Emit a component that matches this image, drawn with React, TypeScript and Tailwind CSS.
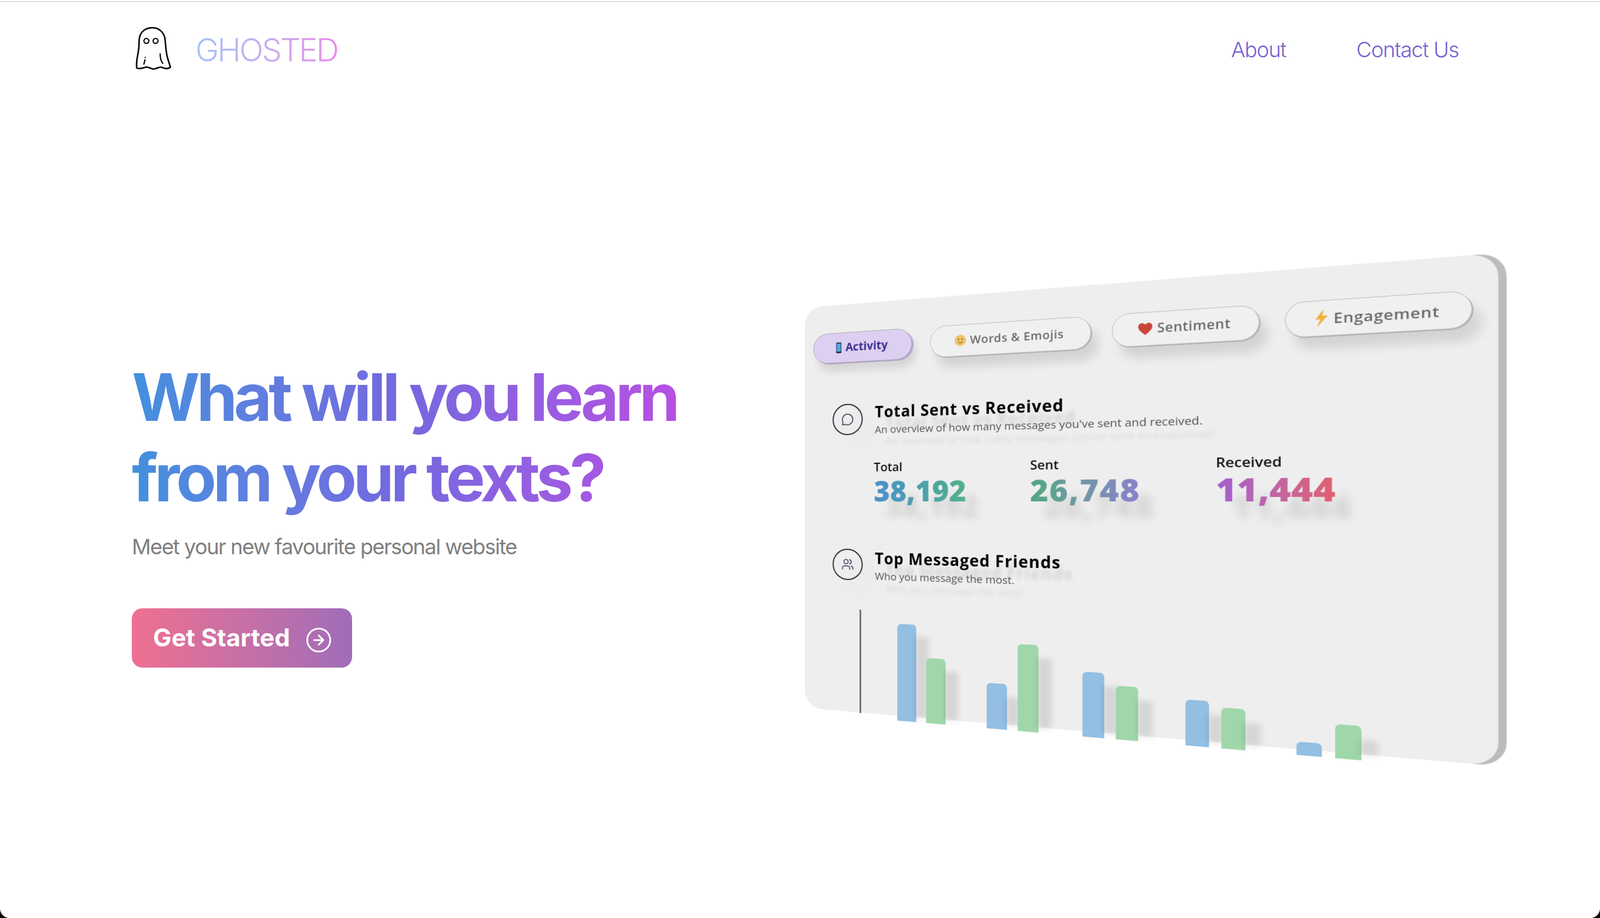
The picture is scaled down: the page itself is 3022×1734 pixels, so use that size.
import { CircleArrowRight, MessageCircle, Users } from 'lucide-react';

const tabs = [
  { label: 'Words & Emojis', width: 'w-[274px]', text: 'text-[20px] tracking-[0.6px]', icon: 'smile' },
  { label: 'Sentiment', width: 'w-[221px]', text: 'text-[21px] tracking-[0.5px]', icon: 'heart' },
  { label: 'Engagement', width: 'ml-[3px] w-[246px]', text: 'text-[22px] tracking-[0.6px]', icon: 'bolt' },
];

// blue / green heights per friend, read off the reference
const friends = [
  { sent: 'h-[176px]', received: 'h-[117px]' },
  { sent: 'h-[80px]', received: 'h-[151px]' },
  { sent: 'h-[110px]', received: 'h-[90px]' },
  { sent: 'h-[75px]', received: 'h-[66px]' },
  { sent: 'h-[21px]', received: 'h-[53px]' },
];

function GhostLogo() {
  return (
    <svg viewBox="100 140 215 255" className="-mt-[6px] h-[85px] w-[72px]" fill="none" stroke="#000" strokeLinecap="round" strokeLinejoin="round">
      <path
        strokeWidth="8.5"
        d="M112 378 C108 340 118 310 122 280 C127 250 124 225 128 205 C136 170 165 150 200 150 C238 150 265 175 272 210 C276 240 276 270 284 310 C290 335 298 355 303 373 C290 385 270 382 255 375 C240 368 225 385 205 384 C190 383 178 370 165 373 C150 376 128 388 112 378 Z"
      />
      <circle cx="167" cy="225" r="14" strokeWidth="7" />
      <circle cx="219" cy="225" r="14" strokeWidth="7" />
      <path strokeWidth="7" d="M159 332 L153 356 M160 318 L160 319 M245 298 C245 320 250 340 260 352" />
    </svg>
  );
}

function TabIcon({ kind }: { kind: string }) {
  if (kind === 'smile') {
    return (
      <svg viewBox="0 0 20 20" className="h-[22px] w-[20px] shrink-0">
        <circle cx="10" cy="10" r="10" fill="#eec36a" />
        <circle cx="7" cy="8" r="1.2" fill="#6b5a2a" />
        <circle cx="13" cy="8" r="1.2" fill="#6b5a2a" />
        <path d="M6 12.5 C8 15 12 15 14 12.5" stroke="#6b5a2a" strokeWidth="1.2" fill="none" />
      </svg>
    );
  }
  if (kind === 'heart') {
    return (
      <svg viewBox="0 0 24 22" className="h-[20px] w-[22px] shrink-0">
        <path fill="#c8453a" d="M12 22 C5 16 0 12 0 6.5 C0 2.5 3 0 6.3 0 C8.6 0 10.8 1.2 12 3.4 C13.2 1.2 15.4 0 17.7 0 C21 0 24 2.5 24 6.5 C24 12 19 16 12 22 Z" />
      </svg>
    );
  }
  return (
    <svg viewBox="0 0 20 30" className="h-[28px] w-[19px] shrink-0">
      <path fill="#efb23c" d="M13 0 L1 17 L8 17 L3 30 L19 11 L11 11 Z" />
    </svg>
  );
}

function Tab({ label, width, text, icon }: { label: string; width: string; text: string; icon: string }) {
  return (
    <div className={`${width} flex h-[56px] items-center justify-center gap-[7px] rounded-full border border-[#bdbdbd] bg-[#f0f0f0] shadow-[1.5px_1.5px_0_#b0b0b0,12px_20px_16px_rgba(0,0,0,0.11)]`}>
      <TabIcon kind={icon} />
      <span className={`${text} font-semibold text-[#6a6a6a] [font-family:'Open_Sans',sans-serif]`}>{label}</span>
    </div>
  );
}

function SectionHead({ title, sub, icon }: { title: string; sub: string; icon: React.ReactNode }) {
  return (
    <div className="flex items-start gap-[23px]">
      <div className="flex size-[58px] shrink-0 items-center justify-center rounded-full border-2 border-[#222] text-[#26304f] [filter:drop-shadow(20px_24px_6px_rgba(0,0,0,0.05))]">
        {icon}
      </div>
      <div className="[font-family:'Open_Sans',sans-serif]">
        <div className="text-[28px] leading-[32px] font-bold tracking-[1px] text-black [text-shadow:20px_20px_6px_rgba(0,0,0,0.1)]">{title}</div>
        <div className="mt-[5px] text-[19px] leading-[24px] text-[#555] [text-shadow:20px_22px_6px_rgba(0,0,0,0.1)]">{sub}</div>
      </div>
    </div>
  );
}

function Stat({ label, value, width, gradient }: { label: string; value: string; width: string; gradient: string }) {
  return (
    <div className={`${width} shrink-0 [font-family:'Open_Sans',sans-serif]`}>
      <div className="text-[22px] leading-[26px] font-semibold text-[#111]">{label}</div>
      <div className="[filter:drop-shadow(22px_28px_7px_rgba(0,0,0,0.11))]">
        <span className={`${gradient} mt-[2px] inline-block bg-clip-text text-[52px] leading-[58px] font-extrabold text-transparent`}>{value}</span>
      </div>
    </div>
  );
}

function Bar({ height, color }: { height: string; color: string }) {
  return (
    <div className={`${height} ${color} relative w-[35px] rounded-t-[7px]`}>
      <div className="absolute top-[22px] bottom-[8px] left-[33px] w-[24px] bg-black/10 blur-[5px]" />
    </div>
  );
}

export default function App() {
  return (
    <div className="h-[1734px] w-full overflow-hidden bg-black [font-family:Inter,sans-serif]">
      <div className="h-full w-full overflow-hidden rounded-b-[18px] bg-white pt-[2px]">
        <div className="h-[2px] bg-[#dedede]" />

        <header className="flex h-[177px] items-center justify-between pt-[3px] pr-[267px] pl-[254px]">
          <div className="flex items-center gap-[43px]">
            <GhostLogo />
            <span className="bg-gradient-to-r from-[#a3c5f6] to-[#e68fe9] bg-clip-text text-[60px] leading-[72px] font-light tracking-[-3px] text-transparent">
              GHOSTED
            </span>
          </div>
          <nav className="flex gap-[133px] text-[40px] font-light tracking-[-1.3px] text-[#7860d4]">
            <a>About</a>
            <a>Contact Us</a>
          </nav>
        </header>

        <main className="flex items-start pl-[249px]">
          <div className="w-[1271px] shrink-0 pt-[493px]">
            <h1 className="w-fit bg-gradient-to-r from-[#4290de] via-[#7468e0] to-[#b54fe2] bg-clip-text text-[124px] leading-[152px] font-bold tracking-[-6.5px] text-transparent">
              What will you learn
              <br />
              from your texts?
            </h1>
            <p className="mt-[29px] text-[40px] leading-[52px] tracking-[-1.65px] text-[#7f7f7f]">Meet your new favourite personal website</p>
            <button className="mt-[90px] flex h-[112px] w-[416px] items-center gap-[28px] rounded-[20px] bg-gradient-to-r from-[#ef6f90] to-[#a06cb8] pl-[40px] text-[46.5px] font-bold text-white">
              Get Started
              <CircleArrowRight className="mt-[8px] size-[52px]" strokeWidth={1.5} />
            </button>
          </div>

          {/* the tilted dashboard shot: matrix maps the 1080x756 face onto the quad in the reference */}
          <div className="relative mt-[400px] h-[756px] w-[1080px] shrink-0 origin-top-left rounded-[34px] bg-[#eeeeee] shadow-[10px_0_0_#bcbcbc] blur-[0.6px] [transform:matrix3d(0.946333,-0.074398,0,-0.000203537,0,1,0,0,0,0,1,0,0,0,0,1)]">
            <div className="flex gap-[33px] pt-[52px] pl-[17px]">
              <div className="flex h-[56px] w-[188px] items-center justify-center gap-[8px] rounded-full border border-[#aaa] bg-[#dccff2] shadow-[3px_2px_0_#b3a6cc,8px_16px_14px_rgba(0,0,0,0.1)]">
                <svg viewBox="0 0 10 20" className="h-[22px] w-[10px] shrink-0">
                  <rect width="10" height="20" rx="1.5" fill="#27304f" />
                  <rect x="1.2" y="2" width="7.6" height="15" fill="#52a8dc" />
                </svg>
                <span className="text-[21px] font-bold text-[#3a2f8c] [font-family:'Open_Sans',sans-serif]">Activity</span>
              </div>
              {tabs.map((tab) => (
                <Tab key={tab.label} {...tab} />
              ))}
            </div>

            <div className="mt-[77px] pl-[55px]">
              <SectionHead
                title="Total Sent vs Received"
                sub="An overview of how many messages you've sent and received."
                icon={<MessageCircle className="size-[24px]" strokeWidth={1.6} />}
              />
            </div>

            <div className="mt-[43px] flex pl-[134px]">
              <Stat label="Total" value="38,192" width="w-[278px]" gradient="bg-gradient-to-r from-[#4a8fcb] to-[#52b088]" />
              <Stat label="Sent" value="26,748" width="w-[291px]" gradient="bg-gradient-to-r from-[#4fa880] to-[#8a80cc] tracking-[1.5px]" />
              <Stat label="Received" value="11,444" width="w-[200px]" gradient="bg-gradient-to-r from-[#a25fd2] to-[#e0606e]" />
            </div>

            <div className="mt-[79px] pl-[55px]">
              <SectionHead
                title="Top Messaged Friends"
                sub="Who you message the most."
                icon={<Users className="size-[24px]" strokeWidth={1.6} />}
              />
            </div>

            <div className="mt-[51px] flex h-[199px] items-end pl-[107px]">
              <div className="mb-[8px] h-[191px] w-[3px] bg-[#666]" />
              <div className="ml-[68px] flex items-end gap-[72px]">
                {friends.map((f, i) => (
                  <div key={i} className="flex items-end gap-[18px]">
                    <Bar height={f.sent} color="bg-[#93bfe2]" />
                    <Bar height={f.received} color="bg-[#a0d7aa]" />
                  </div>
                ))}
              </div>
            </div>
          </div>
        </main>
      </div>
    </div>
  );
}
